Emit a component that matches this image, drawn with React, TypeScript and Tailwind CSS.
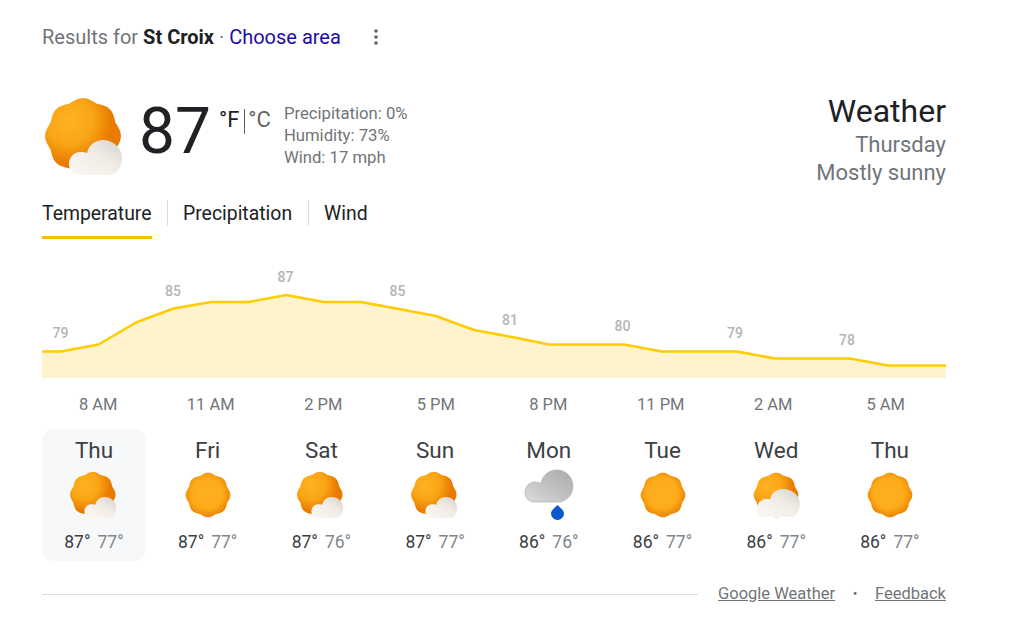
const pts: [number, number][] = [
  [42, 351.5], [60.8, 351.5], [98.5, 344.5], [136, 322.5], [173.5, 308.5], [211, 302], [249, 302], [286, 295],
  [324, 302], [361, 302], [399, 309], [436, 316], [474, 330], [512, 337], [549, 344.5], [587, 344.5], [624, 344.5],
  [662, 351.5], [700, 351.5], [737, 351.5], [775, 358.5], [812, 358.5], [850, 358.5], [888, 365.5], [925, 365.5], [946, 365.5],
];
const labels: [number, number, string][] = [
  [60.5, 338, "79"], [173, 296, "85"], [285.5, 282, "87"], [397.5, 296, "85"], [510, 325, "81"], [622.5, 331, "80"], [735, 338, "79"], [847, 345, "78"],
];
const hours = ["8 AM", "11 AM", "2 PM", "5 PM", "8 PM", "11 PM", "2 AM", "5 AM"];

function sunPath(cx: number, cy: number, r: number, amp = 0.038) {
  let d = "";
  for (let i = 0; i < 160; i++) {
    const t = (i / 160) * Math.PI * 2;
    const wave = 0.5 * (2 * Math.abs(Math.cos(4 * t)) - 1) + 0.5 * Math.cos(8 * t);
    const rr = r * (1 + amp * wave);
    const x = cx + rr * Math.sin(t);
    const y = cy - rr * Math.cos(t);
    d += `${i === 0 ? "M" : "L"}${x.toFixed(2)} ${y.toFixed(2)}`;
  }
  return d + "Z";
}

function Defs({ id }: { id: string }) {
  return (
    <defs>
      <radialGradient id={`${id}s`} cx="0.48" cy="0.46" r="0.56">
        <stop offset="0" stopColor="#ffb120" />
        <stop offset="0.62" stopColor="#fdab1b" />
        <stop offset="1" stopColor="#ea8000" />
      </radialGradient>
      <radialGradient id={`${id}p`} cx="0.32" cy="0.3" r="0.78">
        <stop offset="0" stopColor="#ffb321" />
        <stop offset="0.4" stopColor="#f9a516" />
        <stop offset="0.72" stopColor="#e97b00" />
      </radialGradient>
      <linearGradient id={`${id}c`} x1="0.1" y1="0.9" x2="0.9" y2="0.1">
        <stop offset="0" stopColor="#fbf6f1" />
        <stop offset="0.6" stopColor="#f1ebe5" />
        <stop offset="1" stopColor="#d9d7d4" />
      </linearGradient>
      <linearGradient id={`${id}g`} x1="0.1" y1="0.9" x2="0.9" y2="0.1">
        <stop offset="0" stopColor="#d6d6d6" />
        <stop offset="0.6" stopColor="#bdbdbd" />
        <stop offset="1" stopColor="#b0b0b0" />
      </linearGradient>
    </defs>
  );
}

function PartlySun({ id, className }: { id: string; className: string }) {
  return (
    <svg viewBox="0 0 90 90" className={className}>
      <Defs id={id} />
      <path d={sunPath(43, 41, 36.500)} fill={`url(#${id}p)`} />
      <path
        d="M39 80C33 80 29 75 29 69C29 62 34 57 40 57C43 57 45 57 47 58C49 50 55 45 63 45C73 45 82 53 82 63C82 73 76 80 69 80Z"
        fill={`url(#${id}c)`}
      />
    </svg>
  );
}
function Sun({ id }: { id: string }) {
  return (
    <svg viewBox="0 0 48 48" className="h-12 w-12">
      <Defs id={id} />
      <path d={sunPath(24, 24, 21.500)} fill={`url(#${id}s)`} />
    </svg>
  );
}
function MostlyCloudy({ id }: { id: string }) {
  return (
    <svg viewBox="0 0 48 48" className="h-12 w-12">
      <Defs id={id} />
      <path d={sunPath(24, 24, 21.500)} fill={`url(#${id}p)`} />
      <path
        d="M11 46C7 46 5 42 5 38C5 32 9 28 14 28C15.500 28 17 28 18 28.500C19.500 22 24.500 18 31 18C40 18 48 24.500 48 33C48 40 44 46 39 46Z"
        fill={`url(#${id}c)`}
      />
    </svg>
  );
}
function Rain({ id }: { id: string }) {
  return (
    <svg viewBox="0 0 60 60" className="-ml-[5px] -mt-[6px] h-[60px] w-[60px]">
      <Defs id={id} />
      <path
        d="M14 37C9 37 5 33 5 27.500C5 21 10 17 15 17C17 17 19 17.500 21 18.500C22.500 10 29 5 37 5C46 5 53 12 53 21C53 30 46 37 38 37Z"
        fill={`url(#${id}g)`}
        stroke="#a9a9a9"
        strokeWidth="0.6"
      />
      <path d="M37.500 40C40 43 44 45 44 48.500A6.500 6.500 0 0 1 31 48.500C31 45 35 43 37.500 40Z" fill="#0b57d0" />
    </svg>
  );
}

const days: { d: string; hi: string; lo: string; icon: string }[] = [
  { d: "Thu", hi: "87°", lo: "77°", icon: "p" },
  { d: "Fri", hi: "87°", lo: "77°", icon: "s" },
  { d: "Sat", hi: "87°", lo: "76°", icon: "p" },
  { d: "Sun", hi: "87°", lo: "77°", icon: "p" },
  { d: "Mon", hi: "86°", lo: "76°", icon: "r" },
  { d: "Tue", hi: "86°", lo: "77°", icon: "s" },
  { d: "Wed", hi: "86°", lo: "77°", icon: "m" },
  { d: "Thu", hi: "86°", lo: "77°", icon: "s" },
];

export default function App() {
  const line = pts.map((p) => p.join(",")).join(" ");
  const area = `42,378 ${line} 946,378`;
  return (
    <div className="min-h-[629px] w-[1024px] overflow-hidden bg-white font-['Roboto',sans-serif]">
      <div className="ml-[42px] w-[904px]">
        <div className="flex h-[75px] items-start pt-[25px]">
          <div className="text-[20px] leading-6 text-[#70757a]">
            Results for <b className="font-bold text-[#202124]">St Croix</b> · <span className="text-[#1a0dab]">Choose area</span>
          </div>
          <svg viewBox="0 0 4 16" className="ml-[33px] mt-[4px] h-4 w-1 fill-[#5f6368]">
            <circle cx="2" cy="2" r="1.800" />
            <circle cx="2" cy="8" r="1.800" />
            <circle cx="2" cy="14" r="1.800" />
          </svg>
        </div>

        <div className="flex h-[125px] items-start justify-between">
          <div className="flex items-start">
            <PartlySun id="main" className="-ml-[2px] mt-[20px] h-[90px] w-[90px]" />
            <div className="ml-[9px] mt-[19px] text-[64px] leading-[76px] text-[#202124]">87</div>
            <div className="ml-[8px] mt-[33px] flex text-[22px] leading-6 text-[#5f6368]">
              <span className="text-[#202124]">°F</span>
              <span className="ml-[5px] mr-[3px] mt-[1px] h-[25px] w-px bg-[#5f6368]"></span>
              <span>°C</span>
            </div>
            <div className="ml-[13px] mt-[28px] text-[16.700px] leading-[22px] text-[#70757a]">
              <div>Precipitation: 0%</div>
              <div>Humidity: 73%</div>
              <div>Wind: 17 mph</div>
            </div>
          </div>
          <div className="mt-[18px] text-right">
            <div className="text-[32px] leading-[37px] text-[#202124]">Weather</div>
            <div className="mt-[1px] text-[22px] leading-[28px] text-[#70757a]">Thursday</div>
            <div className="text-[22px] leading-[28px] text-[#70757a]">Mostly sunny</div>
          </div>
        </div>

        <div className="flex h-[40px] items-start whitespace-nowrap text-[19.400px] leading-[28px] text-[#202124]">
          <div className="relative w-[110px]">
            Temperature
            <div className="absolute left-0 top-[36px] h-[3px] w-[110px] bg-[#fbbc04]"></div>
          </div>
          <div className="ml-[15px] h-[26px] w-px bg-[#dadce0]"></div>
          <div className="ml-[15px] w-[110px]">Precipitation</div>
          <div className="ml-[15px] h-[26px] w-px bg-[#dadce0]"></div>
          <div className="ml-[15px]">Wind</div>
        </div>

        <svg viewBox="42 262 904 120" className="mt-[22px] block h-[120px] w-[904px]">
          <polygon points={area} fill="#fef3cd" />
          <polyline points={line} fill="none" stroke="#ffcc00" strokeWidth="2.500" strokeLinejoin="round" />
          {labels.map(([x, y, t], i) => (
            <text key={i} x={x} y={y} textAnchor="middle" fontSize="14" fontWeight="500" fill="#b5b5b5" fontFamily="Roboto, sans-serif">
              {t}
            </text>
          ))}
        </svg>

        <div className="mt-[11px] grid h-[24px] w-[900px] grid-cols-8 text-center text-[16.500px] leading-6 text-[#70757a]">
          {hours.map((h) => (
            <div key={h}>{h}</div>
          ))}
        </div>

        <div className="mt-[12px] flex w-[900px] justify-between">
          {days.map((x, i) => (
            <div
              key={i}
              className={`flex h-[132px] w-[104px] flex-col items-center rounded-[12px] pt-[7px] ${i === 0 ? "bg-[#f7f8fa]" : ""}`}
            >
              <div className="text-[22.500px] leading-[28px] text-[#3c4043]">{x.d}</div>
              <div className="mt-[7px] h-12 w-12">
                {x.icon === "p" && <PartlySun id={`d${i}`} className="-ml-[3px] -mt-[1px] h-[54px] w-[54px]" />}
                {x.icon === "s" && <Sun id={`d${i}`} />}
                {x.icon === "r" && <Rain id={`d${i}`} />}
                {x.icon === "m" && <MostlyCloudy id={`d${i}`} />}
              </div>
              <div className="mt-[12px] flex gap-[7px] text-[17.500px] leading-[22px]">
                <span className="text-[#3c4043]">{x.hi}</span>
                <span className="text-[#80868b]">{x.lo}</span>
              </div>
            </div>
          ))}
        </div>

        <div className="mt-[20px] flex h-[26px] items-center">
          <div className="h-px w-[656px] bg-[#dadce0]"></div>
          <a className="ml-[20px] text-[16.500px] leading-6 text-[#70757a] underline">Google Weather</a>
          <span className="ml-auto text-[14px] text-[#70757a]">•</span>
          <a className="ml-auto text-[16.500px] leading-6 text-[#70757a] underline">Feedback</a>
        </div>
      </div>
    </div>
  );
}
